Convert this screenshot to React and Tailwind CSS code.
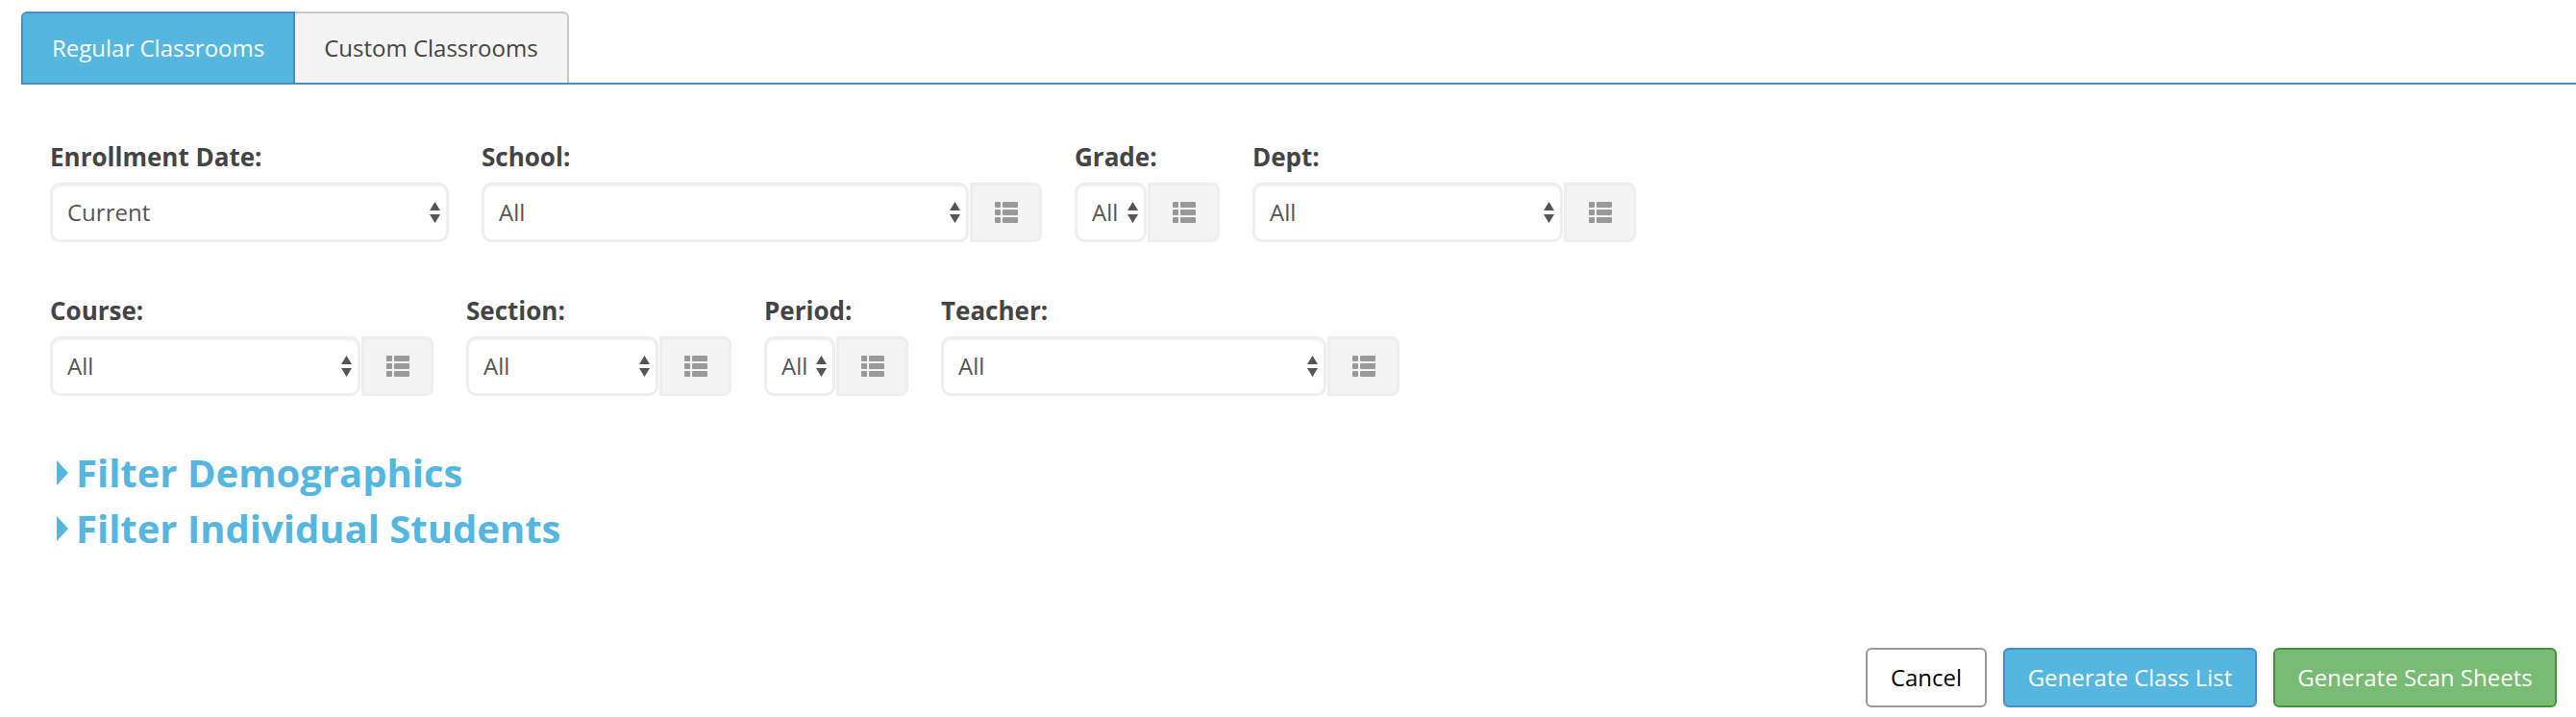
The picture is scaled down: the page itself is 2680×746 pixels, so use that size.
function ListIcon() {
  return (
    <svg width="24" height="22" viewBox="0 0 24 22" fill="#999999">
      <rect x="0" y="0" width="6" height="6" rx="1" />
      <rect x="8" y="0" width="16" height="6" rx="1" />
      <rect x="0" y="8" width="6" height="6" rx="1" />
      <rect x="8" y="8" width="16" height="6" rx="1" />
      <rect x="0" y="16" width="6" height="6" rx="1" />
      <rect x="8" y="16" width="16" height="6" rx="1" />
    </svg>
  );
}

function SelectField({ label, value = "All", width, noButton = false }) {
  return (
    <div className={width}>
      <label className="block h-[44px] text-[26px] leading-[34px] font-bold text-[#444444] whitespace-nowrap">{label}</label>
      <div className="flex h-[62px]">
        <div className="relative flex-1 min-w-0">
          <select
            defaultValue={value}
            className="w-full h-full appearance-none bg-white border-[3px] border-[#eeeeee] rounded-[10px] shadow-[inset_0_2px_2px_rgba(0,0,0,0.04)] pl-[15px] text-[24px] text-[#555555] outline-none"
          >
            <option>{value}</option>
          </select>
          <svg className="absolute right-[9px] top-[20px] pointer-events-none" width="11" height="22" viewBox="0 0 11 22" fill="#555555">
            <path d="M5.5 0 L11 9 L0 9 Z" />
            <path d="M0 13 L11 13 L5.5 22 Z" />
          </svg>
        </div>
        {!noButton && (
          <button className="w-[75px] ml-px shrink-0 flex items-center justify-center bg-[#f4f4f4] border-[3px] border-[#eeeeee] rounded-r-[8px]">
            <ListIcon />
          </button>
        )}
      </div>
    </div>
  );
}

function FilterToggle({ children }) {
  return (
    <div className="flex items-center h-[58px] pl-[7px] text-[#55b7e0] font-bold text-[40px] leading-[58px]">
      <svg className="mr-[8px]" width="12" height="26" viewBox="0 0 12 26" fill="#55b7e0">
        <path d="M0 0 L12 13 L0 26 Z" />
      </svg>
      {children}
    </div>
  );
}

export default function App() {
  return (
    <div className="w-[2680px] h-[746px] bg-white font-['Open_Sans',sans-serif] overflow-hidden">
      {/* Tabs */}
      <div className="pt-[12px] pl-[22px]">
        <div className="flex h-[76px] border-b-2 border-[#4a8cc7]">
          <div className="flex items-center px-[30px] bg-[#55b7e0] border-2 border-b-0 border-[#4a8cc7] rounded-t-[6px] rounded-tr-none text-white text-[24px]">
            Regular Classrooms
          </div>
          <div className="flex items-center px-[30px] bg-[#f4f4f4] border-2 border-b-0 border-l-0 border-[#c8c8c8] rounded-tr-[6px] text-[#444444] text-[24px]">
            Custom Classrooms
          </div>
        </div>
      </div>

      {/* Filters */}
      <div className="pt-[58px] pl-[52px]">
        <div className="flex gap-[34px]">
          <SelectField label="Enrollment Date:" value="Current" width="w-[415px]" noButton />
          <SelectField label="School:" width="w-[583px]" />
          <SelectField label="Grade:" width="w-[151px]" />
          <SelectField label="Dept:" width="w-[399px]" />
        </div>
        <div className="flex gap-[34px] mt-[54px]">
          <SelectField label="Course:" width="w-[399px]" />
          <SelectField label="Section:" width="w-[276px]" />
          <SelectField label="Period:" width="w-[150px]" />
          <SelectField label="Teacher:" width="w-[477px]" />
        </div>
        <div className="mt-[51px]">
          <FilterToggle>Filter Demographics</FilterToggle>
          <FilterToggle>Filter Individual Students</FilterToggle>
        </div>
      </div>

      {/* Footer buttons */}
      <div className="flex justify-end gap-[17px] pr-[20px] mt-[95px]">
        <button className="w-[126px] h-[62px] bg-white border-2 border-[#999999] rounded-[6px] text-[24px] text-black">Cancel</button>
        <button className="w-[264px] h-[62px] bg-[#55b7e0] border-2 border-[#4a8cc7] rounded-[6px] text-[24px] text-white">Generate Class List</button>
        <button className="w-[295px] h-[62px] bg-[#78bb73] border-2 border-[#4a9040] rounded-[6px] text-[24px] text-white">Generate Scan Sheets</button>
      </div>
    </div>
  );
}
